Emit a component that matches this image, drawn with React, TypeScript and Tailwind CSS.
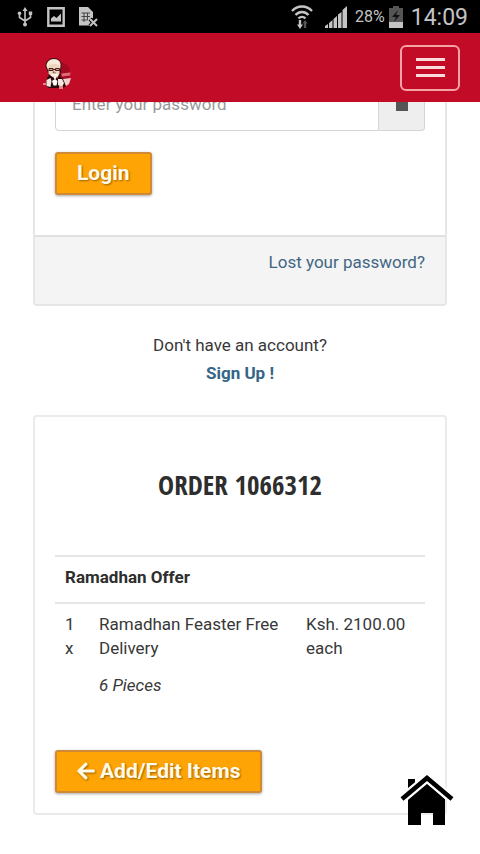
import { FaArrowLeft } from "react-icons/fa";

const items = [
  { qty: "1 x", name: "Ramadhan Feaster Free Delivery", note: "6 Pieces", price: "Ksh. 2100.00 each" },
];

const StatusBar = () => (
  <div className="h-[33px] bg-black flex items-center justify-between pl-4 pr-3 text-[#c4c4c4]">
    <div className="flex items-center gap-3">
      {/* usb */}
      <svg className="w-[18px] h-5" viewBox="0 0 18 20" fill="none" stroke="currentColor" strokeWidth="1.6">
        <path d="M9 3v13M3.500 6v4.500L9 14M14.500 6v4.500L9 14" />
        <path d="M9 0l2.500 4h-5zM12.800 4.500h3.400v3.400h-3.400z" fill="currentColor" stroke="none" />
        <circle cx="3.500" cy="6.200" r="1.800" fill="currentColor" stroke="none" />
        <circle cx="9" cy="17.500" r="2" fill="currentColor" stroke="none" />
      </svg>
      {/* picture */}
      <svg className="w-5 h-5" viewBox="0 0 20 20">
        <path d="M2.300 1.300h15.400v17.400H2.300z" fill="none" stroke="currentColor" strokeWidth="2.400" />
        <path d="M5 14.500v-3l3-2.500 2.500 2L15 6.500v8z" fill="currentColor" />
      </svg>
      {/* sim error */}
      <svg className="w-5 h-[22px]" viewBox="0 0 20 22">
        <path d="M1 1h9l5 5v6l-3 1.500 2 2-2 4H1z" fill="currentColor" />
        <path d="M3.500 7h8.500M3.500 10.500h8.500M3.500 14h6M6 7v9M9.500 7v7" stroke="#444" strokeWidth="1" />
        <path d="M12 13l7 7M19 13l-7 7" stroke="#000" strokeWidth="4" />
        <path d="M12 13l7 7M19 13l-7 7" stroke="currentColor" strokeWidth="2" />
      </svg>
    </div>
    <div className="flex items-center gap-1">
      {/* wifi */}
      <svg className="w-[22px] h-6 mr-2" viewBox="0 0 22 24" fill="none" stroke="currentColor" strokeWidth="2.400">
        <path d="M1 6c5.500-6 14.500-6 20 0M4.500 10c3.700-4 9.300-4 13 0M7.500 13.500c2-2.200 5-2.200 7 0" />
        <path d="M9 15v6" />
        <path d="M6 19.500h6L9 24z" fill="currentColor" stroke="none" />
        <path d="M14 23v-5" stroke="#555" />
        <path d="M11.500 18.500h5L14 15z" fill="#555" stroke="none" />
      </svg>
      {/* signal */}
      <svg className="w-[22px] h-[22px] mr-1" viewBox="0 0 22 22" fill="currentColor">
        <path d="M0 22v-2l3-2v4zM4 22v-5l3.500-3v8zM8.500 22V13l3.500-3v12zM13 22V8.500L16.500 6v16zM17.500 22V4L22 0v22z" />
      </svg>
      <span className="text-base">28%</span>
      {/* battery */}
      <svg className="w-[14px] h-[22px]" viewBox="0 0 14 22">
        <path d="M4 0h6v2h4v20H0V2h4z" fill="#555" />
        <path d="M0 16h14v6H0z" fill="currentColor" />
        <path d="M9 4l-6 7h4l-2 5 6-7H7z" fill="#111" />
      </svg>
      <span className="ml-1 text-[23px] leading-8 pt-[3px]">14:09</span>
    </div>
  </div>
);

const Logo = () => (
  <svg className="w-[30px] h-[32px]" viewBox="0 0 30 32" aria-label="KFC" role="img">
    <path d="M18 4c6 1 9 6 9 11l-1 6-7 1z" fill="#a30a22" />
    {/* hair and face */}
    <path d="M2.500 8c0-5 4-8 8.500-8s8 3 7.500 9l-1 9-4 3-5-1-3-4z" fill="#3a1014" />
    <path d="M3.500 8c0-4 3-7 7.500-7s7 3 6.500 7l-.5 4-12 0z" fill="#f8ead8" />
    <path d="M5.500 7.500c3-2 8-2 11 0v8l-2 4h-5l-4-4z" fill="#eed5bd" />
    {/* glasses */}
    <path d="M6 10.500h4v2H6zM12.500 10.500h4v2h-4zM10 11.500h2.500" fill="#c9a48d" stroke="#4a1a1c" strokeWidth="1" />
    <path d="M11 13l-1 2h3" fill="none" stroke="#6b3a34" strokeWidth=".8" />
    {/* jacket */}
    <path d="M6 17l-2 3-1 8 3 2h14l3-2-2-6-4-4-3 3-3-1z" fill="#2a0c10" />
    <path d="M7.500 16.500l4-1 4 1-1 1.500-3-.5-3 .5zM10.500 18.500h3l-1 3h-1z" fill="#fff8ee" />
    <path d="M3.500 22l4-2 1 3-1 6-4-1zM15 21l4 0 2 4-2 4-4-2z" fill="#f3e6dc" />
    <path d="M9 23l3-2 2.500 2-1 4.500h-3z" fill="#fff" />
    <path d="M20 21l8-1-2 6-3 2z" fill="#f3cfcd" />
    <path d="M18.500 15.500l9-1-.500 3-8 1z" fill="#de6c76" />
    <path d="M0 25h3v2H0zM16 28h4v3h-4z" fill="#e8858a" />
  </svg>
);

const buttonClass =
  "h-[43px] px-5 pb-[2px] rounded-[3px] border-2 border-[#d08a35] bg-[#ffa405] text-[21px] font-bold text-[#fffbe8] shadow-[0_1px_3px_rgba(0,0,0,0.35)] [text-shadow:1px_1px_2px_rgba(0,0,0,0.4)] flex items-center gap-[5px]";

const App = () => {
  return (
    <div className="min-h-screen bg-white font-[Roboto,sans-serif] text-[17px] leading-6 text-[#383838]">
      <header className="sticky top-0 z-10">
        <StatusBar />
        <nav className="h-[69px] bg-[#c20b26] flex items-center justify-between pl-[43px] pr-5">
          <a href="#home" className="pt-3">
            <Logo />
          </a>
          <button
            type="button"
            aria-label="Toggle navigation"
            className="w-[60px] h-[46px] rounded-md border-2 border-[#f3a3a5] flex flex-col items-center justify-center gap-[5px]"
          >
            <span className="w-[29px] h-[3px] bg-[#fbdcda]" />
            <span className="w-[29px] h-[3px] bg-[#fbdcda]" />
            <span className="w-[29px] h-[3px] bg-[#fbdcda]" />
          </button>
        </nav>
      </header>

      <main className="-mt-[25px] px-[33px] pb-10">
        <form className="border-2 border-t-0 border-[#e6e6e6] rounded-b">
          <div className="px-5 pb-10">
            <div className="flex h-[54px]">
              <input
                type="password"
                aria-label="Password"
                placeholder="Enter your password"
                className="flex-1 min-w-0 px-4 border border-[#d4d4d4] rounded-l placeholder:text-[#999]"
              />
              <span className="w-[46px] border border-l-0 border-[#d4d4d4] rounded-r bg-[#eee] flex items-center justify-center">
                <svg className="w-3 h-4" viewBox="0 0 12 16" fill="#555">
                  <path d="M0 6h1V4a5 4 0 0 1 10 0v2h1v9H0zM3 6h6V4a3 2 0 0 0-6 0z" />
                </svg>
              </span>
            </div>
            <button type="button" className={`${buttonClass} mt-[21px]`}>
              Login
            </button>
          </div>
          <div className="h-[69px] px-5 pt-[13px] border-t-2 border-[#e0e0e0] bg-[#f4f4f4] text-right">
            <a href="#lost" className="text-[#426684]">
              Lost your password?
            </a>
          </div>
        </form>

        <div className="mt-[25px] text-center leading-7">
          <p>Don't have an account?</p>
          <a href="#signup" className="font-bold text-[#356587]">
            Sign Up !
          </a>
        </div>

        <section className="mt-7 px-5 pb-5 border-2 border-[#ebebeb] rounded">
          <h2 className="pt-[50px] text-center text-[27px] leading-9 font-bold text-[#2e2e2e] font-['Open_Sans_Condensed','Noto_Sans_Condensed','Roboto_Condensed','Liberation_Sans_Narrow',sans-serif]">
            ORDER 1066312
          </h2>
          <table className="w-full mt-[52px] table-fixed text-left">
            <colgroup>
              <col className="w-[34px]" />
              <col />
              <col className="w-[129px]" />
            </colgroup>
            <thead>
              <tr className="border-y-2 border-[#e6e6e6]">
                <th colSpan={3} className="px-[10px] pt-2 pb-[13px] font-bold text-[#2e2e2e]">
                  Ramadhan Offer
                </th>
              </tr>
            </thead>
            <tbody>
              {items.map((item) => (
                <tr key={item.name} className="align-top">
                  <td className="px-[10px] pt-2">{item.qty}</td>
                  <td className="pl-[10px] pt-2">
                    <p>{item.name}</p>
                    <p className="mt-[13px] italic">{item.note}</p>
                  </td>
                  <td className="pl-[10px] pt-2">{item.price}</td>
                </tr>
              ))}
            </tbody>
          </table>
          <button type="button" className={`${buttonClass} mt-[53px]`}>
            <FaArrowLeft className="w-[18px] h-5 [filter:drop-shadow(1px_1px_1px_rgba(0,0,0,0.4))]" />
            Add/Edit Items
          </button>
        </section>
      </main>

      <a href="#top" aria-label="Home" className="fixed right-[26px] bottom-7">
        <svg className="w-[54px] h-[51px]" viewBox="0 0 54 51">
          <path d="M8 4h7v6l-7 6z" />
          <path d="M27 8L8 24v26h13V38h12v12h12V24z" />
          <path d="M2 24L27 3l25 21" fill="none" stroke="#fff" strokeWidth="9" />
          <path d="M2 24L27 3l25 21" fill="none" stroke="#000" strokeWidth="4.500" />
        </svg>
      </a>
    </div>
  );
};

export default App;
